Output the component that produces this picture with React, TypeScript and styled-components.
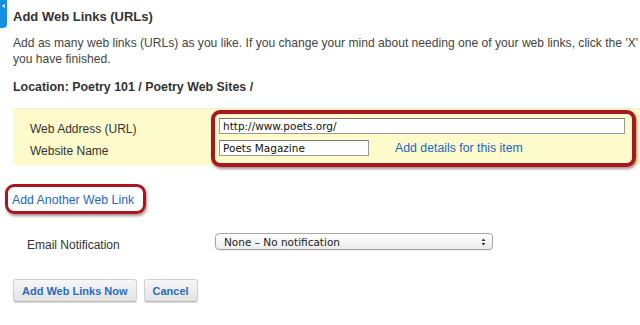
import React, { FC } from 'react';
import styled, { createGlobalStyle } from 'styled-components';

const GlobalStyle = createGlobalStyle`
  html, body {
    margin: 0;
    padding: 0;
    background: #fff;
    overflow: hidden;
  }
  body {
    font-family: 'Liberation Sans', Arial, sans-serif;
    color: #444;
  }
`;

const Page = styled.div`
  position: relative;
  width: 640px;
  height: 325px;
  padding: 8px 0 0 13px;
  box-sizing: border-box;
`;

const SideTab = styled.div`
  position: absolute;
  left: 0;
  top: 0;
  width: 7px;
  height: 28px;
  background: #168fdc;
  border-radius: 0 0 4px 0;

  &::after {
    content: '';
    position: absolute;
    left: 2px;
    top: 4px;
    border-style: solid;
    border-width: 2.5px 3px 2.5px 0;
    border-color: transparent #fff transparent transparent;
  }
`;

const Title = styled.h2`
  margin: 0;
  font-size: 13px;
  line-height: 18px;
  font-weight: bold;
  color: #333;
`;

const Intro = styled.p`
  margin: 9px 0 0;
  font-size: 12.1px;
  line-height: 16px;
  white-space: nowrap;
  color: #444;
`;

const Location = styled.div`
  margin-top: 12px;
  font-size: 12.4px;
  line-height: 16px;
  font-weight: bold;
  color: #333;
`;

const LinkBox = styled.div`
  display: flex;
  margin-top: 13px;
  width: 627px;
  height: 57px;
  padding-top: 1px;
  box-sizing: border-box;
  background: #fdfbcb;
  border-top: 1px solid #efeedd;
`;

const Labels = styled.div`
  display: flex;
  flex-direction: column;
  gap: 6px;
  width: 198px;
  padding: 11px 0 0 17px;
  box-sizing: border-box;
  font-size: 12px;
  line-height: 16px;
  color: #333;
`;

const Highlight = styled.div<{ $inline?: boolean }>`
  border: 4px solid #a8171d;
  border-radius: 9px;
  box-shadow: 1px 2px 3px rgba(60, 0, 0, 0.45);
  box-sizing: border-box;
  ${({ $inline }) =>
    $inline
      ? `
    display: inline-block;
    padding: 3px 9px 3px 4px;
    margin-left: -8px;
    border-width: 3.5px;
  `
      : `
    width: 425px;
    height: 57px;
    padding: 4px 7px 0 4px;
  `}
`;

const Fields = styled.div`
  display: flex;
  flex-direction: column;
  gap: 6px;
`;

const FieldRow = styled.div`
  display: flex;
  align-items: center;
  gap: 26px;
`;

const TextInput = styled.input<{ $width: number }>`
  width: ${({ $width }) => $width}px;
  height: 16px;
  box-sizing: border-box;
  padding: 0 3px;
  border: 1px solid #999;
  border-top-color: #777;
  background: #fff;
  font-family: 'DejaVu Sans', Verdana, sans-serif;
  font-size: 10.5px;
  color: #111;
  outline: none;
`;

const BlueLink = styled.a`
  color: #2466c8;
  font-size: 12.3px;
  line-height: 16px;
  text-decoration: none;
  cursor: pointer;
`;

const AddAnother = styled.div`
  margin-top: 19px;
`;

const NotifyRow = styled.div`
  display: flex;
  align-items: center;
  margin-top: 16px;
  padding-left: 14px;
`;

const NotifyLabel = styled.div`
  width: 188px;
  font-size: 12px;
  line-height: 16px;
  color: #333;
  padding-top: 7px;
`;

const Select = styled.div`
  display: flex;
  align-items: center;
  justify-content: space-between;
  width: 278px;
  height: 17px;
  box-sizing: border-box;
  padding: 0 6px 0 8px;
  border: 1px solid #a5a5a5;
  border-radius: 4px;
  background: linear-gradient(#fff, #ececec);
  box-shadow: 0 1px 1px rgba(0, 0, 0, 0.08);
  font-family: 'DejaVu Sans', Verdana, sans-serif;
  font-size: 10.5px;
  color: #222;
`;

const Buttons = styled.div`
  display: flex;
  gap: 7px;
  margin-top: 26px;
`;

const Button = styled.button`
  height: 23px;
  padding: 0 8px;
  border: 1px solid #d0d0d0;
  border-bottom-color: #b8b8b8;
  border-radius: 3px;
  background: linear-gradient(#f7f7f7, #e2e2e2);
  box-shadow: 0 1px 1px rgba(0, 0, 0, 0.15);
  font-family: 'Liberation Sans', Arial, sans-serif;
  font-size: 11px;
  font-weight: bold;
  color: #2a6cc0;
  cursor: pointer;
`;

const Arrows: FC = () => (
  <svg width="5" height="8" viewBox="0 0 5 8">
    <path d="M0.5 3 L2.5 0.5 L4.5 3 Z M0.5 5 L2.5 7.5 L4.5 5 Z" fill="#333" />
  </svg>
);

const App: FC = () => (
  <>
    <GlobalStyle />
    <Page>
      <SideTab />
      <Title>Add Web Links (URLs)</Title>
      <Intro>
        Add as many web links (URLs) as you like. If you change your mind about needing one of your web links, click the 'X'
        <br />
        you have finished.
      </Intro>
      <Location>Location: Poetry 101 / Poetry Web Sites /</Location>
      <LinkBox>
        <Labels>
          <span>Web Address (URL)</span>
          <span>Website Name</span>
        </Labels>
        <Highlight>
          <Fields>
            <TextInput $width={406} defaultValue="http://www.poets.org/" />
            <FieldRow>
              <TextInput $width={150} defaultValue="Poets Magazine" />
              <BlueLink>Add details for this item</BlueLink>
            </FieldRow>
          </Fields>
        </Highlight>
      </LinkBox>
      <AddAnother>
        <Highlight $inline>
          <BlueLink>Add Another Web Link</BlueLink>
        </Highlight>
      </AddAnother>
      <NotifyRow>
        <NotifyLabel>Email Notification</NotifyLabel>
        <Select>
          <span>None – No notification</span>
          <Arrows />
        </Select>
      </NotifyRow>
      <Buttons>
        <Button>Add Web Links Now</Button>
        <Button>Cancel</Button>
      </Buttons>
    </Page>
  </>
);

export default App;
